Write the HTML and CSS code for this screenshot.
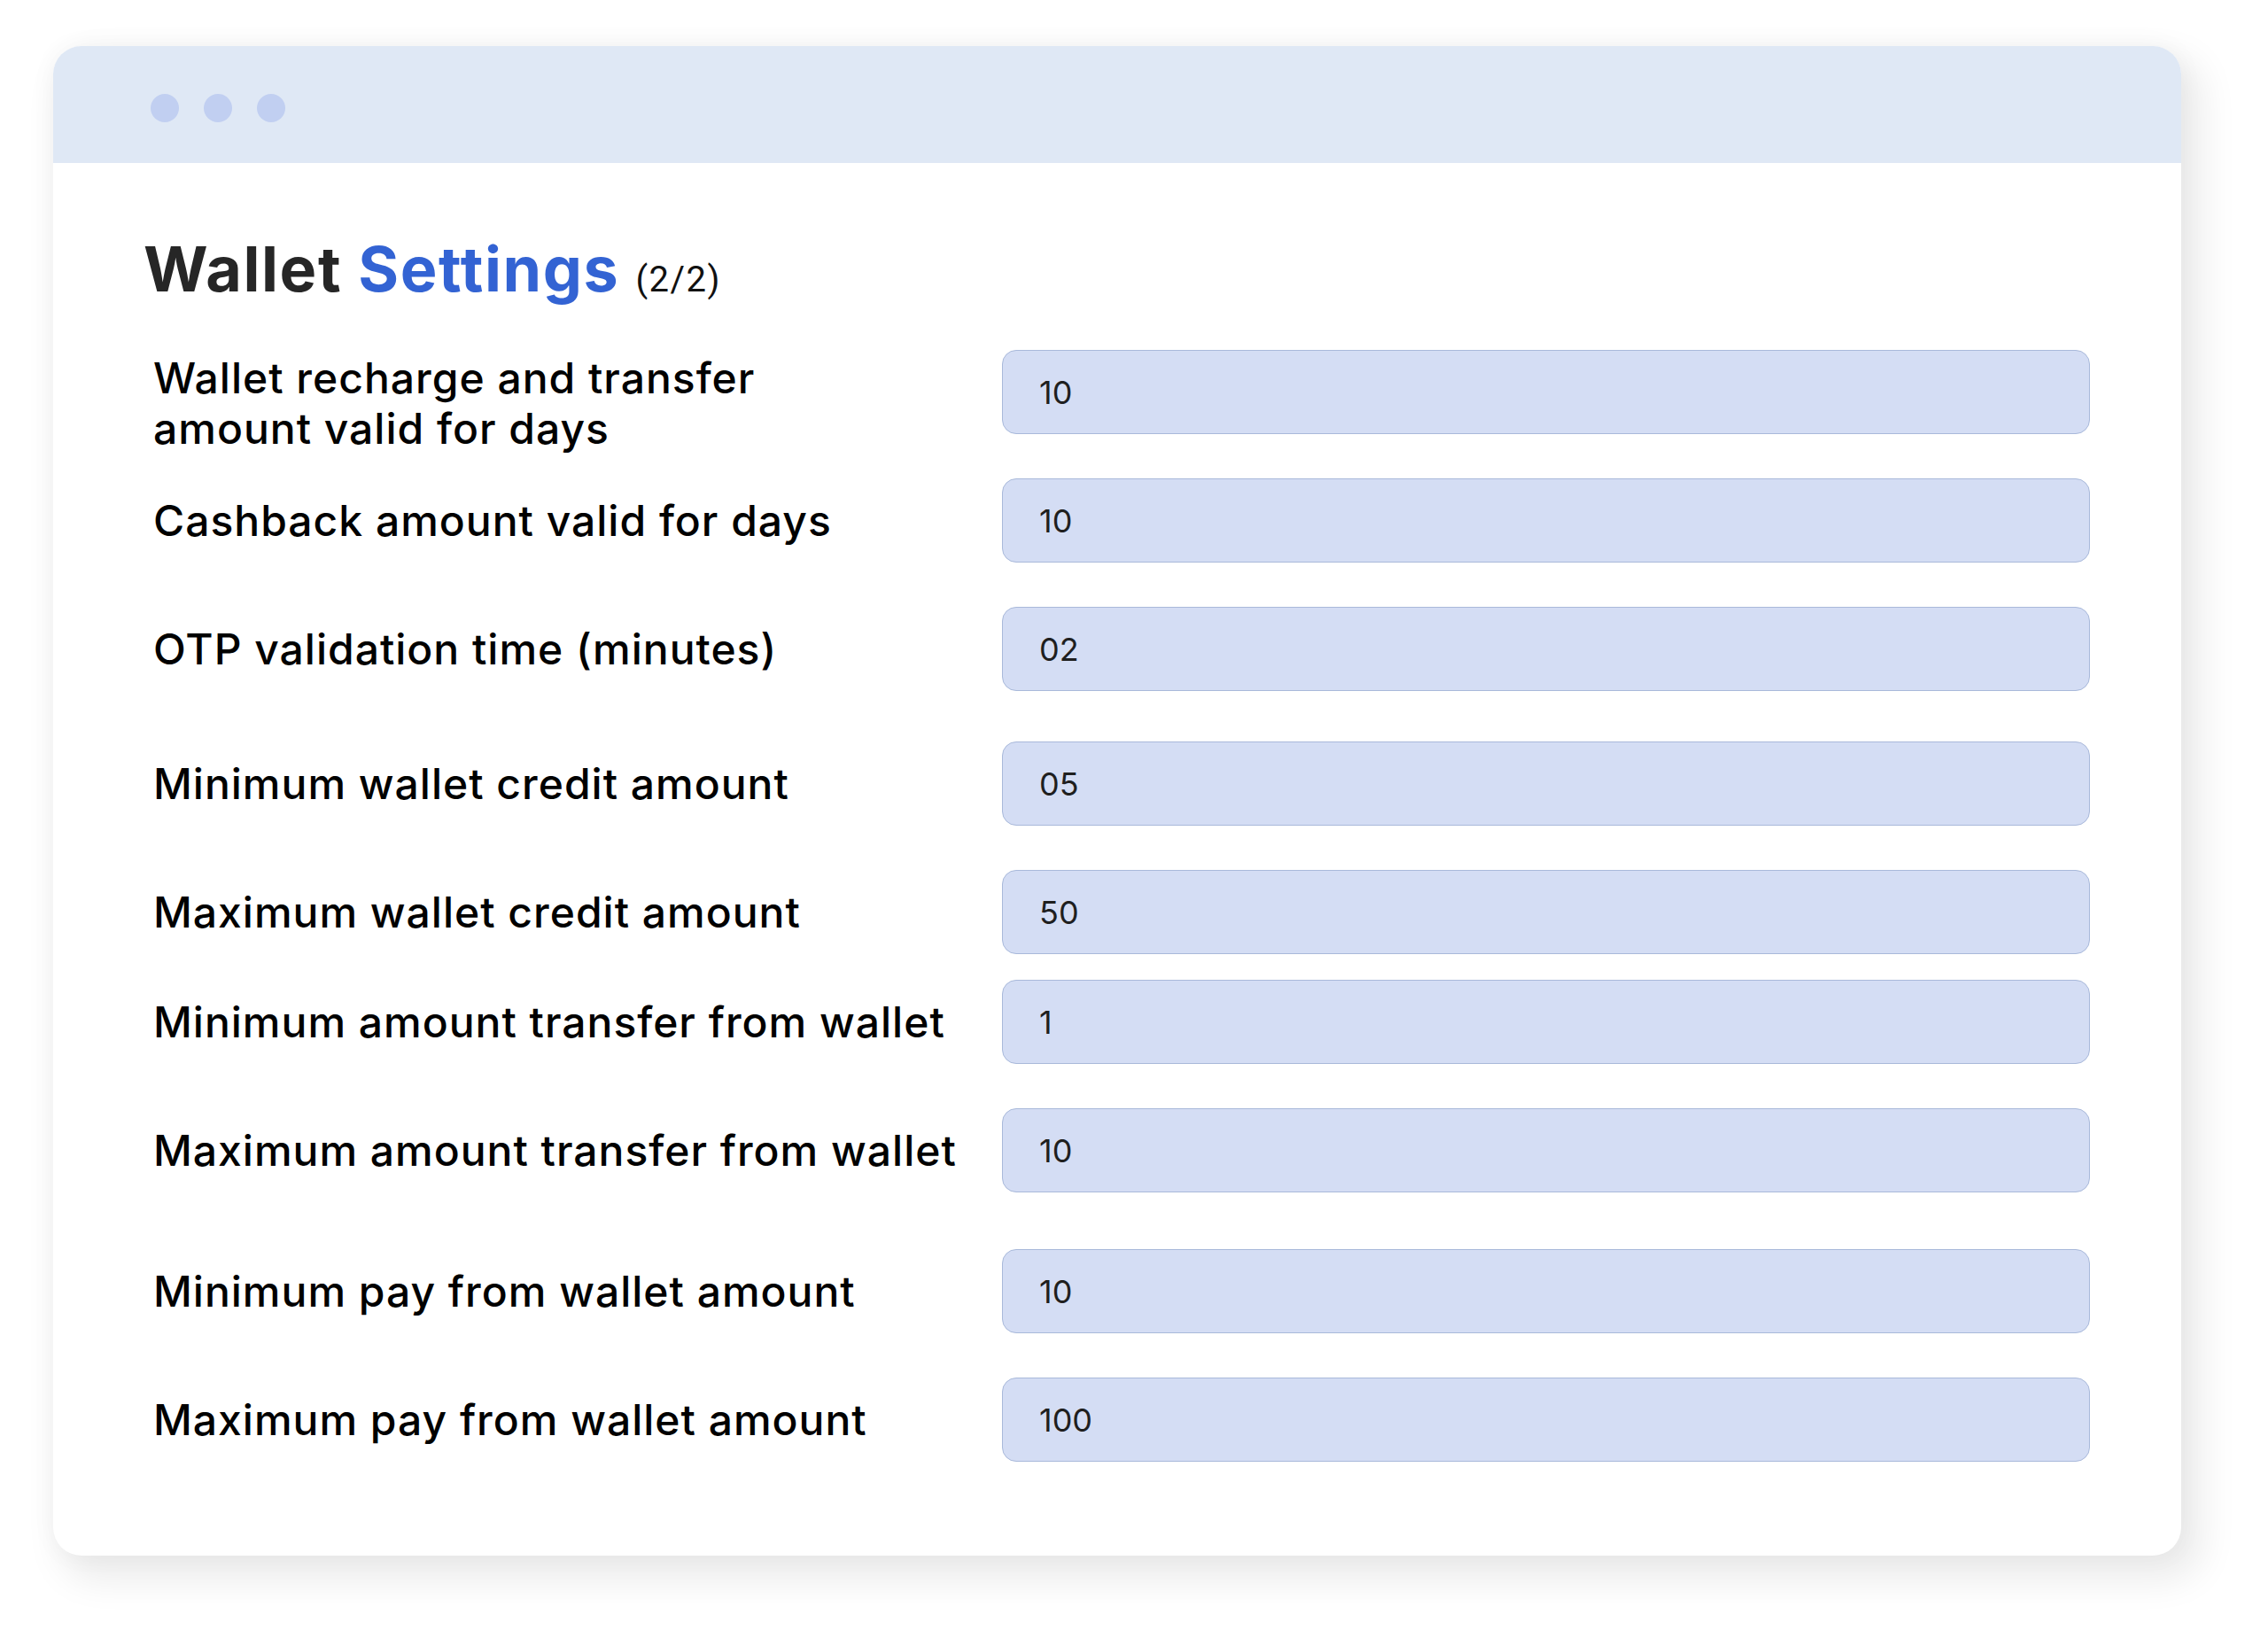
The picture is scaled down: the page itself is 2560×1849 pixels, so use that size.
FILE: index.html
```html
<!DOCTYPE html>
<html lang="en">
<head>
  <meta charset="UTF-8" />
  <meta name="viewport" content="width=device-width, initial-scale=1.0" />
  <title>Wallet Settings</title>
  <link rel="stylesheet" href="styles.css">
</head>
<body>
  <div class="window">
    <div class="window-bar">
      <span class="dot"></span>
      <span class="dot"></span>
      <span class="dot"></span>
    </div>

    <div class="window-body">
      <h1 class="title">Wallet <span class="accent">Settings</span><span class="step">(2/2)</span></h1>

      <form class="settings">
        <div class="field first">
          <label class="field-label multi">Wallet recharge and transfer<br>amount valid for days</label>
          <input class="field-input" type="text" value="10" />
        </div>
        <div class="field">
          <label class="field-label">Cashback amount valid for days</label>
          <input class="field-input" type="text" value="10" />
        </div>
        <div class="field">
          <label class="field-label">OTP validation time (minutes)</label>
          <input class="field-input" type="text" value="02" />
        </div>
        <div class="field gap-m">
          <label class="field-label">Minimum wallet credit amount</label>
          <input class="field-input" type="text" value="05" />
        </div>
        <div class="field">
          <label class="field-label">Maximum wallet credit amount</label>
          <input class="field-input" type="text" value="50" />
        </div>
        <div class="field gap-s">
          <label class="field-label">Minimum amount transfer from wallet</label>
          <input class="field-input" type="text" value="1" />
        </div>
        <div class="field">
          <label class="field-label">Maximum amount transfer from wallet</label>
          <input class="field-input" type="text" value="10" />
        </div>
        <div class="field gap-l">
          <label class="field-label">Minimum pay from wallet amount</label>
          <input class="field-input" type="text" value="10" />
        </div>
        <div class="field">
          <label class="field-label">Maximum pay from wallet amount</label>
          <input class="field-input" type="text" value="100" />
        </div>
      </form>
    </div>
  </div>
</body>
</html>
```

FILE: styles.css
```css
* { box-sizing: border-box; }
body { margin: 0; background: #fff; font-family: Inter, "Open Sans", sans-serif; }

.window { width: 2402px; margin: 52px 0 98px 60px; background: #fff; border-radius: 32px; overflow: hidden; box-shadow: 16px 20px 40px 8px rgba(0,0,0,0.08), 0 0 30px rgba(0,0,0,0.04); }
.window-bar { height: 132px; background: #dfe8f5; padding: 54px 110px 0; display: flex; gap: 28px; }
.dot { width: 32px; height: 32px; border-radius: 50%; background: #c1cff1; }

.window-body { padding: 86px 103px 106px 113px; }
.title { margin: 0 0 57px -11px; font-size: 70px; line-height: 68px; font-weight: 700; color: #262626; letter-spacing: 1.6px; }
.title .accent { color: #3363d3; }
.title .step { margin-left: 18px; font-family: Roboto, sans-serif; font-size: 40px; line-height: 1; font-weight: 400; color: #111; letter-spacing: 1.5px; }

.field { display: flex; align-items: center; height: 95px; margin-top: 50px; }
.field.first { margin-top: 0; }
.field.gap-s { margin-top: 29px; }
.field.gap-m { margin-top: 57px; }
.field.gap-l { margin-top: 64px; }
.field-label { width: 958px; flex: none; font-size: 48px; line-height: 57px; font-weight: 500; color: #000; letter-spacing: 1px; }
.field-label.multi { align-self: flex-start; margin-top: 3px; }
.field-input { flex: 1; height: 95px; padding: 0 0 0 41px; background: #d4ddf4; border: 1.5px solid #a9b9da; border-radius: 16px; font-family: Inter, sans-serif; font-size: 36px; color: #1f1f1f; outline: none; }
```
